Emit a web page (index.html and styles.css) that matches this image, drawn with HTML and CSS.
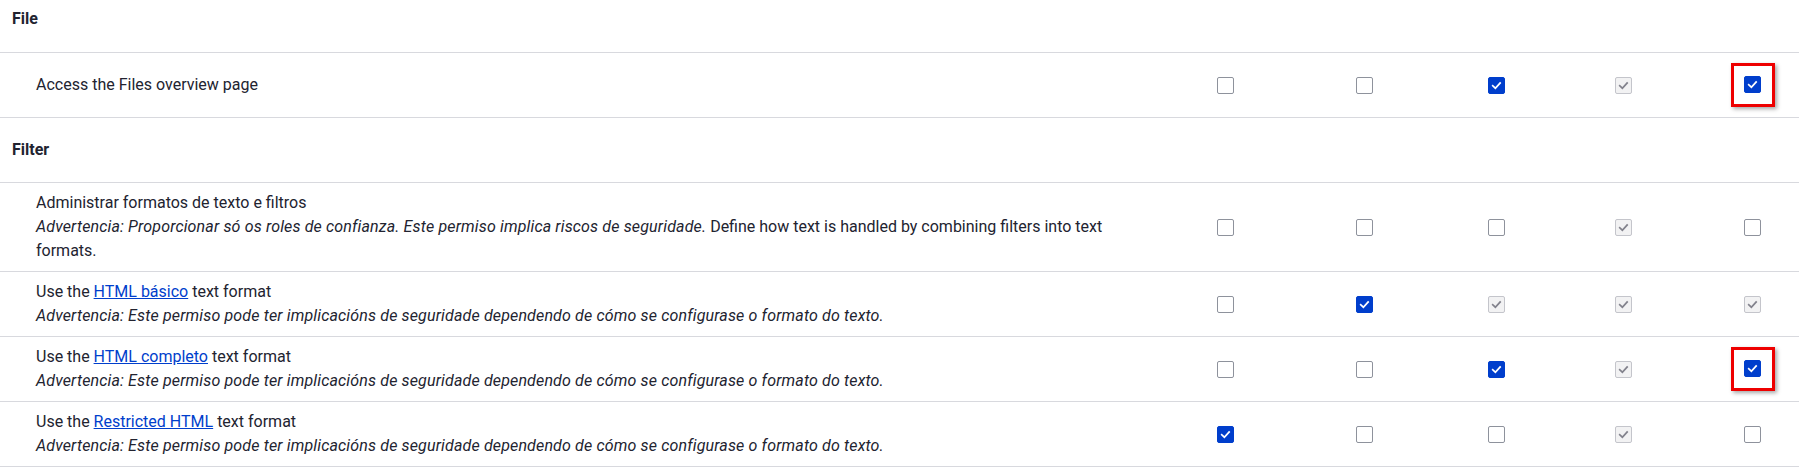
FILE: index.html
```html
<!DOCTYPE html>
<html lang="gl">
<head>
<meta charset="utf-8">
<title>Permisos</title>
<link rel="stylesheet" href="styles.css">
</head>
<body>
<table class="perms">
  <colgroup>
    <col class="c-name">
    <col class="c-r1">
    <col class="c-r2">
    <col class="c-r3">
    <col class="c-r4">
    <col class="c-r5">
  </colgroup>
  <tbody>
    <tr class="module">
      <td colspan="6">File</td>
    </tr>
    <tr>
      <td class="desc"><div class="title">Access the Files overview page</div></td>
      <td class="chk"><span class="cb"></span></td>
      <td class="chk"><span class="cb"></span></td>
      <td class="chk"><span class="cb on"><svg viewBox="0 0 17 17"><path d="M4.3 8.8 7.2 11.6 12.6 5.6"/></svg></span></td>
      <td class="chk"><span class="cb dis"><svg viewBox="0 0 17 17"><path d="M4.3 8.8 7.2 11.6 12.6 5.6"/></svg></span></td>
      <td class="chk"><span class="hl"><span class="cb on"><svg viewBox="0 0 17 17"><path d="M4.3 8.8 7.2 11.6 12.6 5.6"/></svg></span></span></td>
    </tr>
    <tr class="module">
      <td colspan="6">Filter</td>
    </tr>
    <tr>
      <td class="desc">
        <div class="title">Administrar formatos de texto e filtros</div>
        <div class="note"><em>Advertencia: Proporcionar só os roles de confianza. Este permiso implica riscos de seguridade.</em> Define how text is handled by combining filters into text formats.</div>
      </td>
      <td class="chk"><span class="cb"></span></td>
      <td class="chk"><span class="cb"></span></td>
      <td class="chk"><span class="cb"></span></td>
      <td class="chk"><span class="cb dis"><svg viewBox="0 0 17 17"><path d="M4.3 8.8 7.2 11.6 12.6 5.6"/></svg></span></td>
      <td class="chk"><span class="cb"></span></td>
    </tr>
    <tr>
      <td class="desc">
        <div class="title">Use the <a href="#">HTML básico</a> text format</div>
        <div class="note"><em>Advertencia: Este permiso pode ter implicacións de seguridade dependendo de cómo se configurase o formato do texto.</em></div>
      </td>
      <td class="chk"><span class="cb"></span></td>
      <td class="chk"><span class="cb on"><svg viewBox="0 0 17 17"><path d="M4.3 8.8 7.2 11.6 12.6 5.6"/></svg></span></td>
      <td class="chk"><span class="cb dis"><svg viewBox="0 0 17 17"><path d="M4.3 8.8 7.2 11.6 12.6 5.6"/></svg></span></td>
      <td class="chk"><span class="cb dis"><svg viewBox="0 0 17 17"><path d="M4.3 8.8 7.2 11.6 12.6 5.6"/></svg></span></td>
      <td class="chk"><span class="cb dis"><svg viewBox="0 0 17 17"><path d="M4.3 8.8 7.2 11.6 12.6 5.6"/></svg></span></td>
    </tr>
    <tr>
      <td class="desc">
        <div class="title">Use the <a href="#">HTML completo</a> text format</div>
        <div class="note"><em>Advertencia: Este permiso pode ter implicacións de seguridade dependendo de cómo se configurase o formato do texto.</em></div>
      </td>
      <td class="chk"><span class="cb"></span></td>
      <td class="chk"><span class="cb"></span></td>
      <td class="chk"><span class="cb on"><svg viewBox="0 0 17 17"><path d="M4.3 8.8 7.2 11.6 12.6 5.6"/></svg></span></td>
      <td class="chk"><span class="cb dis"><svg viewBox="0 0 17 17"><path d="M4.3 8.8 7.2 11.6 12.6 5.6"/></svg></span></td>
      <td class="chk"><span class="hl"><span class="cb on"><svg viewBox="0 0 17 17"><path d="M4.3 8.8 7.2 11.6 12.6 5.6"/></svg></span></span></td>
    </tr>
    <tr>
      <td class="desc">
        <div class="title">Use the <a href="#">Restricted HTML</a> text format</div>
        <div class="note"><em>Advertencia: Este permiso pode ter implicacións de seguridade dependendo de cómo se configurase o formato do texto.</em></div>
      </td>
      <td class="chk"><span class="cb on"><svg viewBox="0 0 17 17"><path d="M4.3 8.8 7.2 11.6 12.6 5.6"/></svg></span></td>
      <td class="chk"><span class="cb"></span></td>
      <td class="chk"><span class="cb"></span></td>
      <td class="chk"><span class="cb dis"><svg viewBox="0 0 17 17"><path d="M4.3 8.8 7.2 11.6 12.6 5.6"/></svg></span></td>
      <td class="chk"><span class="cb"></span></td>
    </tr>
  </tbody>
</table>
</body>
</html>
```
FILE: styles.css
```css
html, body {
  margin: 0;
  padding: 0;
  background: #ffffff;
}

body {
  font-family: "Roboto", "Liberation Sans", sans-serif;
  font-size: 16px;
  line-height: 24px;
  color: #222330;
}

.perms {
  width: 100%;
  border-collapse: collapse;
  table-layout: fixed;
  margin-top: -13px;
}

.c-r1 { width: 103px; }
.c-r2 { width: 176px; }
.c-r3 { width: 87px; }
.c-r4 { width: 167px; }
.c-r5 { width: 92px; }

.perms tr {
  height: 65px;
  border-bottom: 1px solid #d8d9de;
}

.perms td {
  padding: 8px 16px 8px 12px;
  vertical-align: middle;
}

.module td {
  font-weight: 700;
}

.perms td.desc {
  padding-left: 36px;
  padding-right: 64px;
}

.note em {
  font-style: italic;
  letter-spacing: 0.15px;
}

.desc a {
  color: #003ecc;
  text-decoration: underline;
}

.perms td.chk {
  text-align: center;
  padding: 0;
}

.cb {
  display: inline-flex;
  width: 17px;
  height: 17px;
  box-sizing: border-box;
  border: 1px solid #8e929c;
  border-radius: 2px;
  background: #ffffff;
  vertical-align: middle;
}

.cb svg {
  width: 100%;
  height: 100%;
  display: block;
}

.cb path {
  fill: none;
  stroke-width: 2;
  stroke-linecap: square;
}

.cb.on {
  background: #003ecc;
  border-color: #003ecc;
}

.cb.on path {
  stroke: #ffffff;
}

.cb.dis {
  background: #f2f2f3;
  border-color: #c4c5cb;
}

.cb.dis path {
  stroke: #82828c;
}

.hl {
  display: inline-flex;
  align-items: center;
  justify-content: center;
  width: 44px;
  height: 44px;
  box-sizing: border-box;
  border: 3px solid #ee0000;
  box-shadow: 2px 2px 4px rgba(0, 0, 0, 0.35);
  vertical-align: middle;
}
```
